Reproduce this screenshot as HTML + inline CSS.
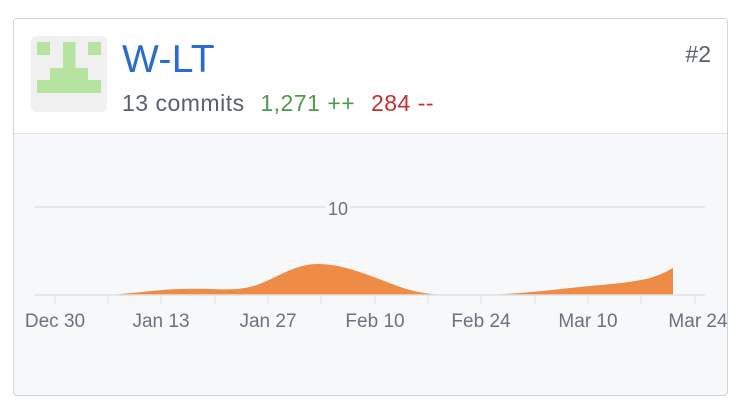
<!DOCTYPE html>
<html><head><style>
body{margin:0;width:742px;height:410px;background:#fff;font-family:"Liberation Sans",sans-serif;position:relative;overflow:hidden}
.card{position:absolute;left:13px;top:18px;width:713px;height:376px;border:1px solid #d1d5da;border-radius:4px;background:#f6f8fa;overflow:hidden}
.head{position:absolute;left:0;top:0;width:713px;height:114px;background:#fff;border-bottom:1px solid #e1e4e8}
.av{position:absolute;left:17px;top:17px;width:76px;height:76px;background:#f0f0f0;border-radius:5px}
.t{position:absolute;left:108px;top:19px;font-size:39px;color:#2a6bd3;letter-spacing:0.3px}
.s{position:absolute;left:108px;top:71px;font-size:23px;color:#586069;white-space:nowrap;letter-spacing:0.5px}
.g{color:#4a9d4a;margin-left:2px}.r{color:#c53030;margin-left:2px}
.n{position:absolute;right:16px;top:22px;font-size:23px;color:#586069}
</style></head><body>
<div class="card">
<div class="head">
<div class="av"><svg width="76" height="76" viewBox="30 36 76 76" fill="#b6e3a0">
<rect x="36" y="42" width="13" height="13"/><rect x="62" y="42" width="12.5" height="26"/><rect x="87" y="42" width="13" height="13"/>
<rect x="49" y="68" width="38" height="12.5"/><rect x="36" y="80" width="64" height="13"/></svg></div>
<div class="t">W-LT</div>
<div class="s">13 commits&nbsp;&nbsp;<span class="g">1,271 ++</span>&nbsp;&nbsp;<span class="r">284 --</span></div>
<div class="n">#2</div>
</div>
</div>
<svg style="position:absolute;left:0;top:0" width="742" height="410">
<defs><clipPath id="c"><rect x="0" y="0" width="727" height="410"/></clipPath></defs>
<line x1="34" y1="207" x2="705" y2="207" stroke="#dfe1e4" stroke-width="1.5"/>
<rect x="326" y="198" width="24" height="18" fill="#f6f8fa"/>
<text x="338" y="215" font-size="18" fill="#6a737d" text-anchor="middle" font-family="Liberation Sans">10</text>
<path d="M108 295 C140 293 160 289 185 289 C210 288 225 291 245 288 C270 284 290 264 318 264 C350 264 385 283 410 290 C430 295 440 295 480 295 C520 294 550 290 580 287 C610 284 630 283 650 278 C660 275 668 271 673 268 L673 295 Z" fill="#ee8c46"/>
<line x1="34" y1="295" x2="705" y2="295" stroke="#dfe1e4" stroke-width="1.5"/>
<g stroke="#dfe1e4" stroke-width="1">
<line x1="55" y1="295" x2="55" y2="304"/><line x1="108" y1="295" x2="108" y2="304"/><line x1="161" y1="295" x2="161" y2="304"/><line x1="215" y1="295" x2="215" y2="304"/><line x1="268" y1="295" x2="268" y2="304"/><line x1="321" y1="295" x2="321" y2="304"/><line x1="375" y1="295" x2="375" y2="304"/><line x1="428" y1="295" x2="428" y2="304"/><line x1="481" y1="295" x2="481" y2="304"/><line x1="535" y1="295" x2="535" y2="304"/><line x1="588" y1="295" x2="588" y2="304"/><line x1="641" y1="295" x2="641" y2="304"/><line x1="695" y1="295" x2="695" y2="304"/>
</g>
<g font-size="19" fill="#6a737d" text-anchor="middle" font-family="Liberation Sans" clip-path="url(#c)">
<text x="55" y="327">Dec 30</text><text x="161" y="327">Jan 13</text><text x="268" y="327">Jan 27</text><text x="375" y="327">Feb 10</text><text x="481" y="327">Feb 24</text><text x="588" y="327">Mar 10</text><text x="698" y="327">Mar 24</text>
</g>
</svg>
</body></html>
